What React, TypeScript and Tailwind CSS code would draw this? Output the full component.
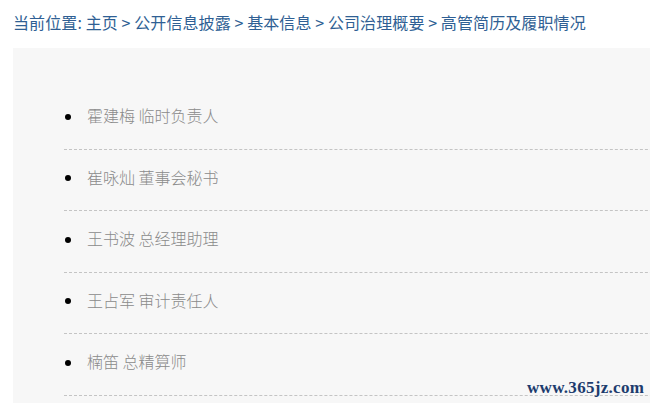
const crumbs = ['主页', '公开信息披露', '基本信息', '公司治理概要', '高管简历及履职情况'];

const officers = [
  { name: '霍建梅', title: '临时负责人' },
  { name: '崔咏灿', title: '董事会秘书' },
  { name: '王书波', title: '总经理助理' },
  { name: '王占军', title: '审计责任人' },
  { name: '楠笛', title: '总精算师' },
];

export default function App() {
  return (
    <div className="relative w-[650px] h-[403px] overflow-hidden bg-white">
      {/* breadcrumb */}
      <div
        className="pl-[13px] pt-[11px] h-[48px] text-[16px] leading-[22px] text-[#2f5f94] whitespace-nowrap tracking-[0.1px]"
        style={{ fontFamily: '"Noto Sans CJK SC", "Liberation Sans", sans-serif' }}
      >
        当前位置: {crumbs.join(' > ')}
      </div>

      <div className="ml-[13px] w-[700px] h-[400px] bg-[#f7f7f7] pt-[40px]">
        <ul className="ml-[51px]">
          {officers.map((o, i) => (
            <li
              key={i}
              className="flex items-center h-[61.5px] pb-[6px] border-b border-dashed border-[#c4c4c4]"
            >
              <span className="w-[6px] h-[6px] rounded-full bg-black ml-[1px] mt-[3px]" />
              <span
                className="ml-[16px] text-[16px] text-[#8a8a8a] font-light"
                style={{ fontFamily: '"Noto Sans CJK SC", "Liberation Serif", serif' }}
              >
                {o.name} {o.title}
              </span>
            </li>
          ))}
        </ul>
      </div>

      {/* site mark */}
      <div
        className="absolute left-[527px] top-[378px] text-[17px] leading-[20px] text-[#1d3c6e] tracking-[0.3px] font-bold"
        style={{ fontFamily: '"Liberation Serif", serif' }}
      >
        www.365jz.com
      </div>
    </div>
  );
}
